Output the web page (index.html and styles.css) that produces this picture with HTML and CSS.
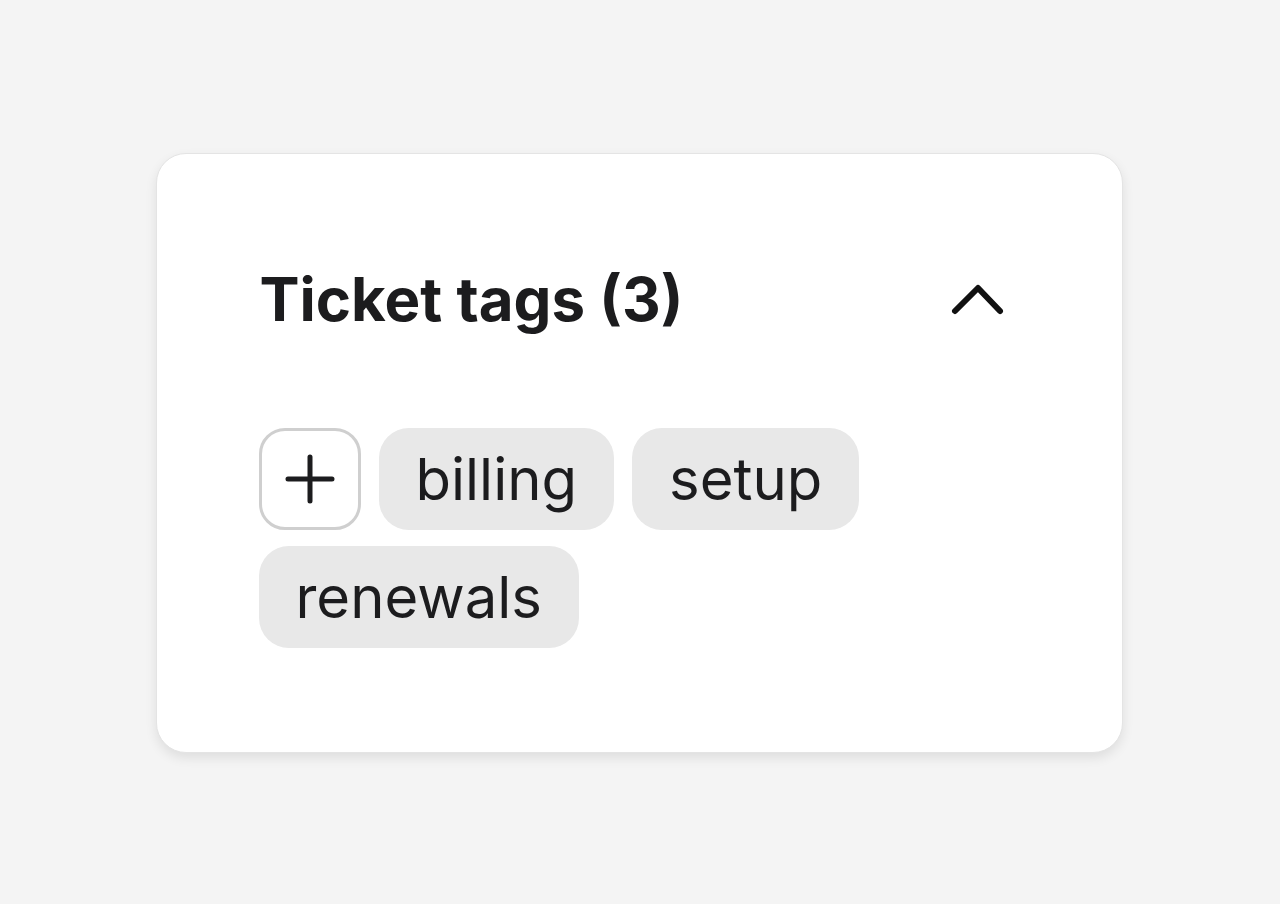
FILE: index.html
```html
<!DOCTYPE html>
<html lang="en">
<head>
<meta charset="utf-8">
<title>Ticket tags</title>
<link rel="stylesheet" href="styles.css">
</head>
<body>
<main class="stage">
  <section class="card">
    <header class="card-head">
      <h2 class="title">Ticket tags (3)</h2>
      <button class="toggle" aria-label="Collapse">
        <svg width="60" height="40" viewBox="0 0 60 40" fill="none" stroke="#111" stroke-width="6" stroke-linecap="round" stroke-linejoin="round"><path d="M8 32 L31 9 L53 32"/></svg>
      </button>
    </header>
    <div class="tags">
      <button class="add" aria-label="Add tag">
        <svg width="52" height="52" viewBox="0 0 52 52" fill="none" stroke="#1c1c1e" stroke-width="5" stroke-linecap="round"><path d="M26 4 V48 M4 26 H48"/></svg>
      </button>
      <span class="tag">billing</span>
      <span class="tag">setup</span>
      <span class="tag">renewals</span>
    </div>
  </section>
</main>
</body>
</html>
```

FILE: styles.css
```css
* { box-sizing: border-box; }
html, body { margin: 0; padding: 0; }
body {
  background: #f4f4f4;
  font-family: Inter, "Noto Sans", sans-serif;
  color: #1c1c1e;
}
.stage {
  height: 904px;
  display: flex;
  justify-content: center;
  padding-top: 153px;
}
.card {
  width: 967px;
  height: 600px;
  margin-left: -2px;
  background: #fff;
  border-radius: 30px;
  border: 1px solid #e4e4e4;
  box-shadow: 0 5px 12px rgba(0,0,0,0.09);
  padding: 104px 102px;
  display: flex;
  flex-direction: column;
}
.card-head {
  display: flex;
  align-items: center;
  justify-content: space-between;
  height: 86px;
}
.title {
  margin: 0 0 0 1px;
  font-size: 60px;
  font-weight: 700;
  letter-spacing: 0;
  line-height: 1;
}
.toggle {
  border: 0;
  background: none;
  padding: 0;
  margin-right: 13px;
  width: 60px;
  height: 40px;
  display: flex;
}
.tags {
  margin-top: 89px;
  display: flex;
  flex-wrap: wrap;
  gap: 16px 18px;
}
.add {
  width: 102px;
  height: 102px;
  border: 3px solid #cfcfcf;
  border-radius: 26px;
  background: #fff;
  padding: 0;
  display: flex;
  align-items: center;
  justify-content: center;
}
.tag {
  height: 102px;
  padding: 0 37px 0 37px;
  background: #e8e8e8;
  border-radius: 30px;
  font-size: 58px;
  line-height: 102px;
  font-weight: 400;
}
```
